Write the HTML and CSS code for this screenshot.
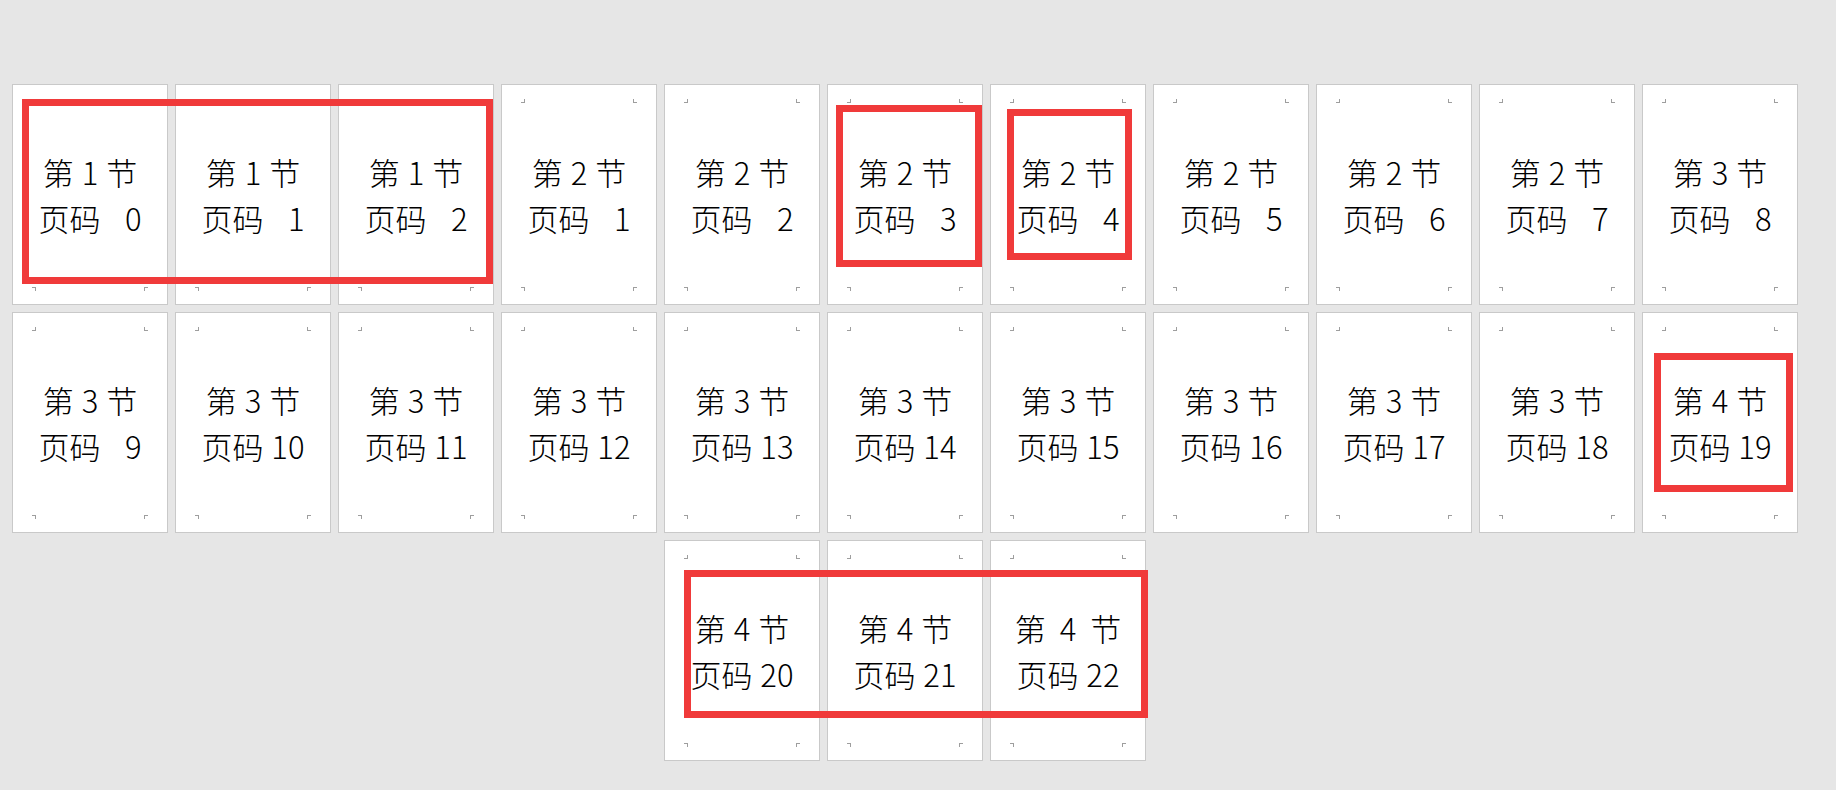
FILE: index.html
```html
<!DOCTYPE html>
<html lang="zh-CN">
<head>
<meta charset="utf-8">
<title>页面视图</title>
<link rel="stylesheet" href="styles.css">
</head>
<body>
<div class="sheet">
  <div class="page"><div class="l1">第 1 节</div><div class="l2">页码 <span class="num">0</span></div></div>
  <div class="page"><div class="l1">第 1 节</div><div class="l2">页码 <span class="num">1</span></div></div>
  <div class="page"><div class="l1">第 1 节</div><div class="l2">页码 <span class="num">2</span></div></div>
  <div class="page"><div class="l1">第 2 节</div><div class="l2">页码 <span class="num">1</span></div></div>
  <div class="page"><div class="l1">第 2 节</div><div class="l2">页码 <span class="num">2</span></div></div>
  <div class="page"><div class="l1">第 2 节</div><div class="l2">页码 <span class="num">3</span></div></div>
  <div class="page"><div class="l1">第 2 节</div><div class="l2">页码 <span class="num">4</span></div></div>
  <div class="page"><div class="l1">第 2 节</div><div class="l2">页码 <span class="num">5</span></div></div>
  <div class="page"><div class="l1">第 2 节</div><div class="l2">页码 <span class="num">6</span></div></div>
  <div class="page"><div class="l1">第 2 节</div><div class="l2">页码 <span class="num">7</span></div></div>
  <div class="page"><div class="l1">第 3 节</div><div class="l2">页码 <span class="num">8</span></div></div>

  <div class="page"><div class="l1">第 3 节</div><div class="l2">页码 <span class="num">9</span></div></div>
  <div class="page"><div class="l1">第 3 节</div><div class="l2">页码 <span class="num">10</span></div></div>
  <div class="page"><div class="l1">第 3 节</div><div class="l2">页码 <span class="num">11</span></div></div>
  <div class="page"><div class="l1">第 3 节</div><div class="l2">页码 <span class="num">12</span></div></div>
  <div class="page"><div class="l1">第 3 节</div><div class="l2">页码 <span class="num">13</span></div></div>
  <div class="page"><div class="l1">第 3 节</div><div class="l2">页码 <span class="num">14</span></div></div>
  <div class="page"><div class="l1">第 3 节</div><div class="l2">页码 <span class="num">15</span></div></div>
  <div class="page"><div class="l1">第 3 节</div><div class="l2">页码 <span class="num">16</span></div></div>
  <div class="page"><div class="l1">第 3 节</div><div class="l2">页码 <span class="num">17</span></div></div>
  <div class="page"><div class="l1">第 3 节</div><div class="l2">页码 <span class="num">18</span></div></div>
  <div class="page"><div class="l1">第 4 节</div><div class="l2">页码 <span class="num">19</span></div></div>

  <div class="page"><div class="l1">第 4 节</div><div class="l2">页码 <span class="num">20</span></div></div>
  <div class="page"><div class="l1">第 4 节</div><div class="l2">页码 <span class="num">21</span></div></div>
  <div class="page"><div class="l1 wide">第 4 节</div><div class="l2">页码 <span class="num">22</span></div></div>

  <div class="mark m1"></div>
  <div class="mark m2"></div>
  <div class="mark m3"></div>
  <div class="mark m4"></div>
  <div class="mark m5"></div>
</div>
</body>
</html>
```
FILE: styles.css
```css
html, body {
  margin: 0;
  padding: 0;
  background: #e6e6e6;
}

body {
  width: 1836px;
  height: 790px;
  overflow: hidden;
  font-family: "Noto Sans CJK SC", "Noto Sans", sans-serif;
  color: #000;
}

.sheet {
  position: relative;
  width: 1786px;
  margin: 84px 0 0 12px;
  display: flex;
  flex-wrap: wrap;
  justify-content: center;
  column-gap: 7px;
  row-gap: 7px;
}

.page {
  box-sizing: border-box;
  width: 156px;
  height: 221px;
  background-color: #fff;
  border: 1px solid #c9c9c9;
  display: flex;
  flex-direction: column;
  align-items: center;
  justify-content: center;
  font-size: 31px;
  font-weight: 300;
  line-height: 45.5px;
  white-space: pre;
  background-image:
    linear-gradient(#9e9e9e, #9e9e9e),
    linear-gradient(#9e9e9e, #9e9e9e),
    linear-gradient(#9e9e9e, #9e9e9e),
    linear-gradient(#9e9e9e, #9e9e9e),
    linear-gradient(#9e9e9e, #9e9e9e),
    linear-gradient(#9e9e9e, #9e9e9e),
    linear-gradient(#9e9e9e, #9e9e9e),
    linear-gradient(#9e9e9e, #9e9e9e);
  background-repeat: no-repeat;
  background-size:
    4px 1px, 1px 4px,
    4px 1px, 1px 4px,
    4px 1px, 1px 4px,
    4px 1px, 1px 4px;
  background-position:
    left 19px top 17px, left 22px top 14px,
    right 19px top 17px, right 22px top 14px,
    left 19px bottom 16px, left 22px bottom 13px,
    right 19px bottom 16px, right 22px bottom 13px;
}

.l1, .l2 {
  text-align: center;
  word-spacing: 1px;
}

.l1.wide {
  word-spacing: 7px;
}

.num {
  display: inline-block;
  min-width: 2ch;
  text-align: right;
}

.mark {
  position: absolute;
  box-sizing: border-box;
  border: 7px solid #f03a3a;
  pointer-events: none;
}

.m1 { left: 10px;   top: 15px;  width: 471px; height: 185px; }
.m2 { left: 824px;  top: 21px;  width: 146px; height: 162px; }
.m3 { left: 995px;  top: 25px;  width: 125px; height: 151px; }
.m4 { left: 1642px; top: 269px; width: 139px; height: 139px; }
.m5 { left: 672px;  top: 486px; width: 464px; height: 148px; }
```
